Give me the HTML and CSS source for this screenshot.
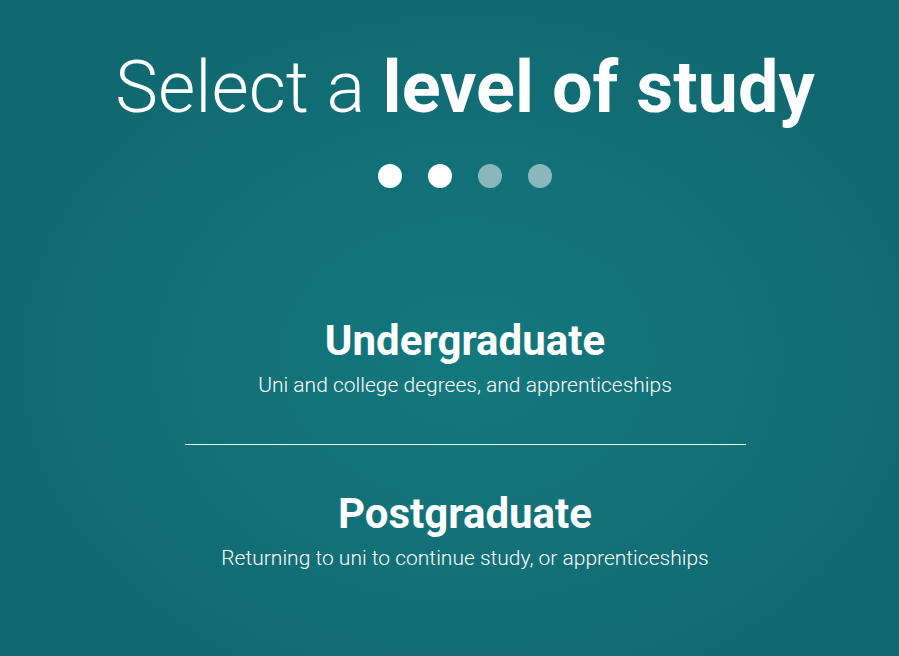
FILE: index.html
```html
<!DOCTYPE html>
<html lang="en">
<head>
  <meta charset="UTF-8" />
  <title>Select a level of study</title>
  <link rel="stylesheet" href="styles.css">
</head>
<body>
  <div class="container">
    <h1 class="titulo">Select a <strong>level of study</strong></h1>

    <div class="passos">
      <span class="passo ativo"></span>
      <span class="passo ativo"></span>
      <span class="passo"></span>
      <span class="passo"></span>
    </div>

    <div class="opcoes">
      <a class="opcao" href="#">
        <h2>Undergraduate</h2>
        <p>Uni and college degrees, and apprenticeships</p>
      </a>
      <a class="opcao" href="#">
        <h2>Postgraduate</h2>
        <p>Returning to uni to continue study, or apprenticeships</p>
      </a>
    </div>
  </div>
</body>
</html>
```

FILE: styles.css
```css
:root {
  --cor-fundo-centro: #14787f;
  --cor-fundo-borda: #106971;
  --cor-texto: #fff;
  --cor-passo: rgba(255, 255, 255, 0.5);
}

* {
  box-sizing: border-box;
}

html, body {
  height: 100%;
}

body {
  margin: 0;
  font-family: Roboto, 'Liberation Sans', sans-serif;
  color: var(--cor-texto);
  background: radial-gradient(ellipse at 52% 55%, var(--cor-fundo-centro) 0%, var(--cor-fundo-borda) 75%);
  overflow: hidden;
}

.container {
  padding: 52px 0 0 31px;
  display: flex;
  flex-direction: column;
  align-items: center;
}

.titulo {
  margin: 0;
  font-size: 72px;
  line-height: 72px;
  font-weight: 300;
  white-space: nowrap;
}

.titulo strong {
  font-weight: 700;
}

.passos {
  display: flex;
  gap: 26px;
  margin-top: 40px;
}

.passo {
  width: 24px;
  height: 24px;
  border-radius: 50%;
  background-color: var(--cor-passo);
}

.passo.ativo {
  background-color: #fff;
}

.opcoes {
  margin-top: 84px;
  width: 561px;
}

.opcao {
  display: block;
  padding: 45px 0;
  text-align: center;
  color: inherit;
  text-decoration: none;
}

.opcao + .opcao {
  border-top: 1px solid #fff;
}

.opcao h2 {
  margin: 0;
  font-size: 42px;
  line-height: 48px;
  font-weight: 700;
}

.opcao p {
  margin: 6px 0 0;
  font-size: 21px;
  line-height: 28px;
  font-weight: 300;
}
```
